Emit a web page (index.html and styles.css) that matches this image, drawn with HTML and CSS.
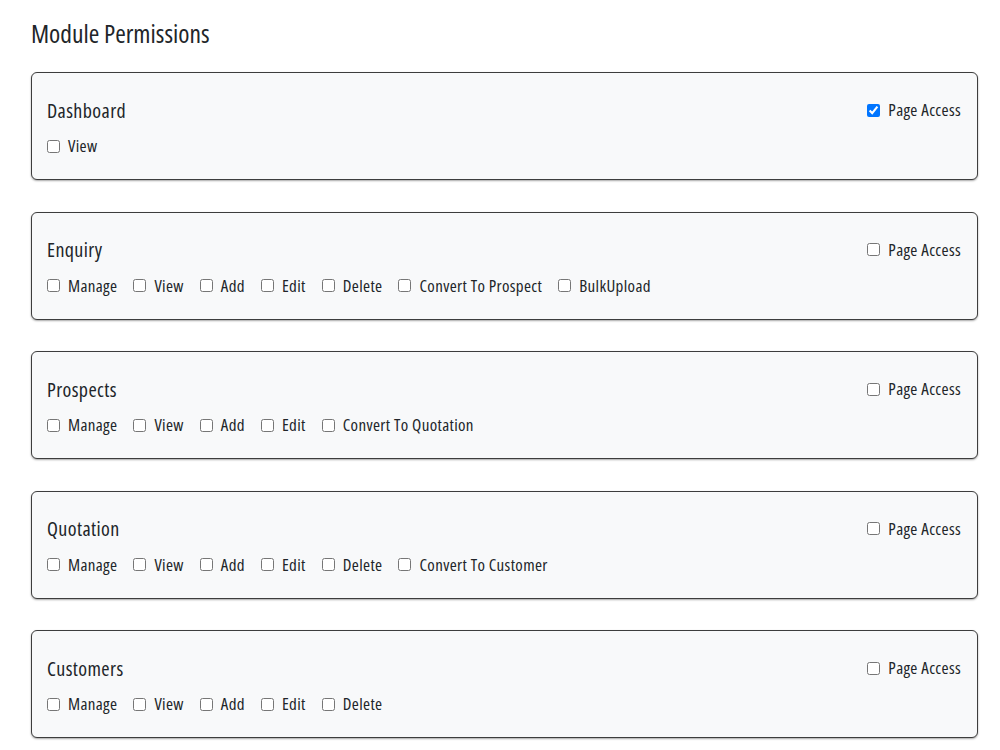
FILE: index.html
```html
<!DOCTYPE html>
<html>
<head>
    <meta charset="UTF-8">
    <meta name="viewport" content="width=device-width, initial-scale=1.0">
    <title>Module Permissions</title>
    <link rel="stylesheet" href="styles.css">
</head>
<body>
    <div class="page">
        <h2 class="page-title">Module Permissions</h2>

        <div class="module">
            <div class="module-head">
                <h3>Dashboard</h3>
                <label class="perm"><input type="checkbox" checked> Page Access</label>
            </div>
            <div class="perms">
                <label class="perm"><input type="checkbox"> View</label>
            </div>
        </div>

        <div class="module">
            <div class="module-head">
                <h3>Enquiry</h3>
                <label class="perm"><input type="checkbox"> Page Access</label>
            </div>
            <div class="perms">
                <label class="perm"><input type="checkbox"> Manage</label>
                <label class="perm"><input type="checkbox"> View</label>
                <label class="perm"><input type="checkbox"> Add</label>
                <label class="perm"><input type="checkbox"> Edit</label>
                <label class="perm"><input type="checkbox"> Delete</label>
                <label class="perm"><input type="checkbox"> Convert To Prospect</label>
                <label class="perm"><input type="checkbox"> BulkUpload</label>
            </div>
        </div>

        <div class="module">
            <div class="module-head">
                <h3>Prospects</h3>
                <label class="perm"><input type="checkbox"> Page Access</label>
            </div>
            <div class="perms">
                <label class="perm"><input type="checkbox"> Manage</label>
                <label class="perm"><input type="checkbox"> View</label>
                <label class="perm"><input type="checkbox"> Add</label>
                <label class="perm"><input type="checkbox"> Edit</label>
                <label class="perm"><input type="checkbox"> Convert To Quotation</label>
            </div>
        </div>

        <div class="module">
            <div class="module-head">
                <h3>Quotation</h3>
                <label class="perm"><input type="checkbox"> Page Access</label>
            </div>
            <div class="perms">
                <label class="perm"><input type="checkbox"> Manage</label>
                <label class="perm"><input type="checkbox"> View</label>
                <label class="perm"><input type="checkbox"> Add</label>
                <label class="perm"><input type="checkbox"> Edit</label>
                <label class="perm"><input type="checkbox"> Delete</label>
                <label class="perm"><input type="checkbox"> Convert To Customer</label>
            </div>
        </div>

        <div class="module">
            <div class="module-head">
                <h3>Customers</h3>
                <label class="perm"><input type="checkbox"> Page Access</label>
            </div>
            <div class="perms">
                <label class="perm"><input type="checkbox"> Manage</label>
                <label class="perm"><input type="checkbox"> View</label>
                <label class="perm"><input type="checkbox"> Add</label>
                <label class="perm"><input type="checkbox"> Edit</label>
                <label class="perm"><input type="checkbox"> Delete</label>
            </div>
        </div>
    </div>
</body>
</html>
```

FILE: styles.css
```css
body { margin: 0; font-family: "Open Sans", "Liberation Sans", sans-serif; font-stretch: condensed; color: #212529; background: #fff; }
.page { padding: 15px 0 0 31px; width: 947px; }
.page-title { margin: 0 0 21px; font-size: 25.5px; font-weight: 500; line-height: 36px; }
.module { background: #f8f9fa; border: 1px solid #3d3d3d; border-radius: 6px; box-shadow: 0 1px 2px rgba(0,0,0,.35); padding: 22px 16px 21px 15px; margin-bottom: 31.5px; }
.module-head { display: flex; justify-content: space-between; align-items: center; height: 30px; }
.module-head h3 { margin: 0; font-size: 20px; font-weight: 500; letter-spacing: 0.4px; }
.perms { display: flex; gap: 16px; margin-top: 9px; height: 24px; align-items: center; }
.perm { display: inline-flex; align-items: center; gap: 8px; font-size: 17px; line-height: 24px; letter-spacing: 0.35px; }
.perm input { margin: 0; width: 13px; height: 13px; }
```
